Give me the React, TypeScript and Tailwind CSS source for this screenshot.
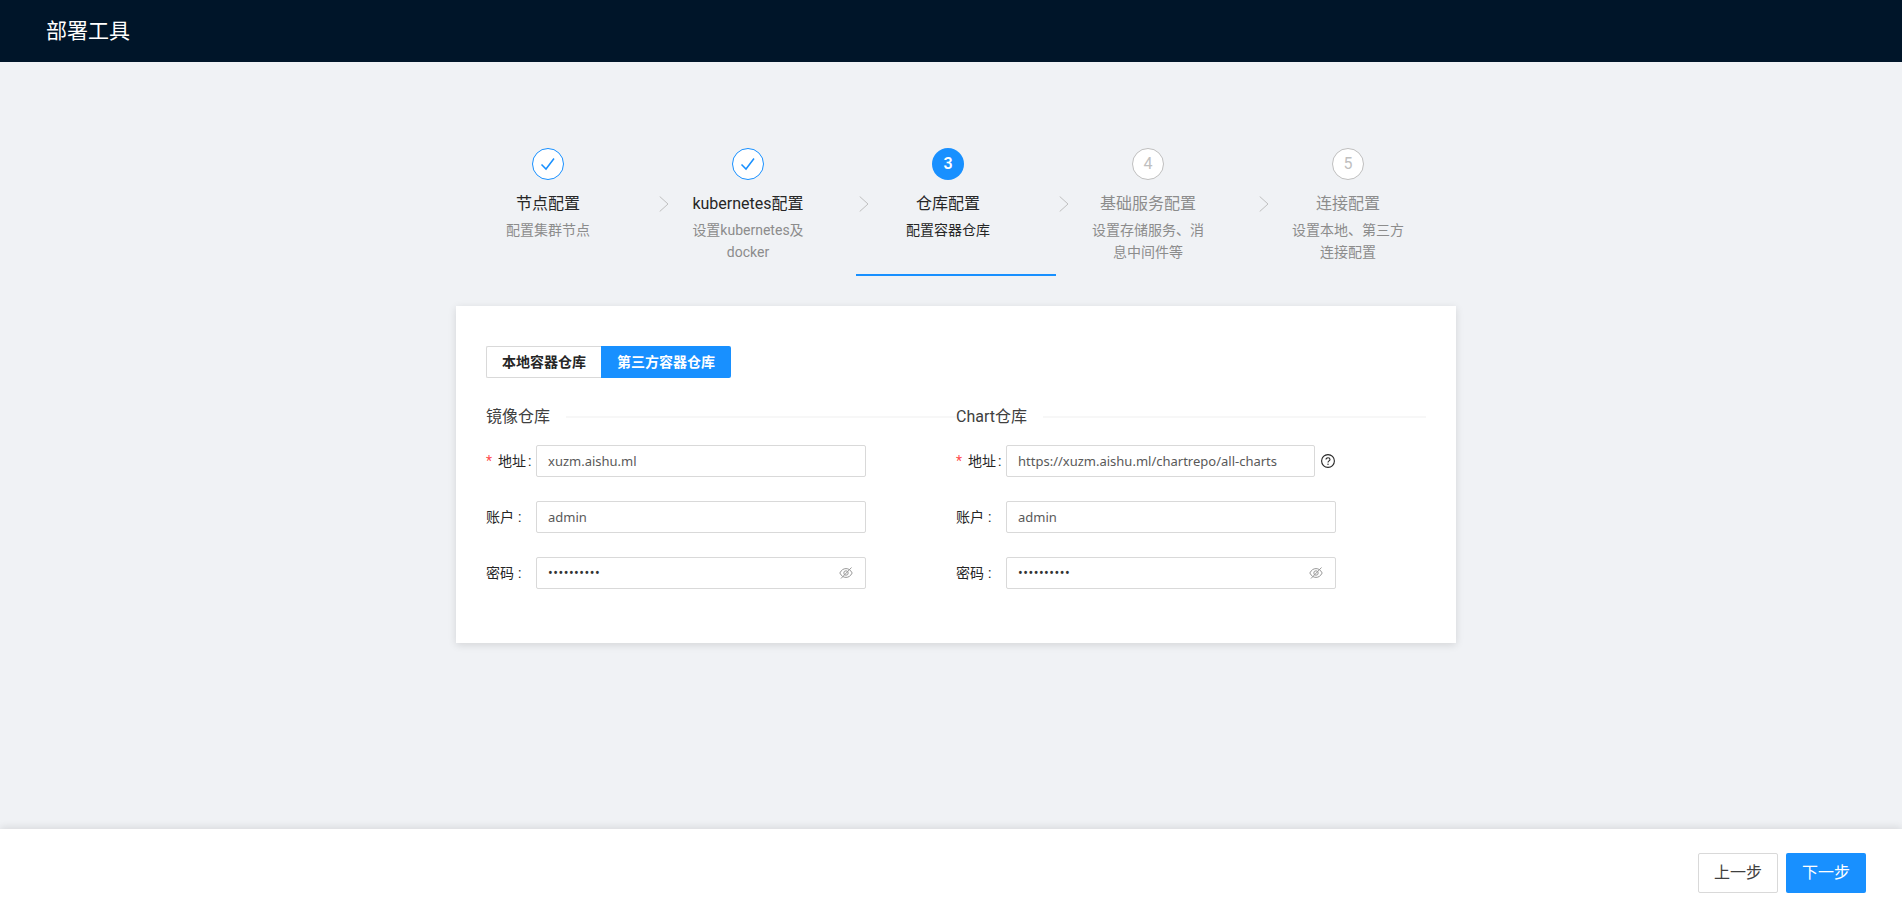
const font = "font-['Roboto','Noto_Sans_CJK_SC',sans-serif]"

const steps = [
  { key: 1, title: "节点配置", desc: "配置集群节点", state: "done" },
  { key: 2, title: "kubernetes配置", desc: "设置kubernetes及docker", state: "done" },
  { key: 3, title: "仓库配置", desc: "配置容器仓库", state: "active" },
  { key: 4, title: "基础服务配置", desc: "设置存储服务、消息中间件等", state: "todo" },
  { key: 5, title: "连接配置", desc: "设置本地、第三方连接配置", state: "todo" },
]

function CheckMark() {
  return (
    <svg width="16" height="14" viewBox="0 0 16 14" fill="none" stroke="#1890ff" strokeWidth="1.5">
      <path d="M1.5 7.5 L6 12 L14 1.5" />
    </svg>
  )
}

function EyeOff() {
  return (
    <svg width="14" height="14" viewBox="0 0 14 14" fill="none" stroke="#999" strokeWidth="1">
      <path d="M0.8 7 C2.4 4 4.4 2.6 7 2.6 C9.6 2.6 11.6 4 13.2 7 C11.6 10 9.6 11.4 7 11.4 C4.4 11.4 2.4 10 0.8 7 Z" />
      <circle cx="7" cy="7" r="2.2" />
      <path d="M2 12.5 L12.5 1.5" />
    </svg>
  )
}

function HelpIcon() {
  return (
    <svg width="14" height="14" viewBox="0 0 14 14" fill="none" stroke="#262626" strokeWidth="1.1">
      <circle cx="7" cy="7" r="6.4" />
      <path d="M5 5.6 C5 4.4 5.9 3.8 7 3.8 C8.1 3.8 9 4.5 9 5.5 C9 6.9 7 6.9 7 8.4" />
      <circle cx="7" cy="10.2" r="0.7" fill="#262626" stroke="none" />
    </svg>
  )
}

function Step({ step, last }: { step: (typeof steps)[number]; last: boolean }) {
  const { state } = step
  return (
    <div className={`relative w-[200px] h-[128px] pr-4 flex flex-col items-center ${state === "active" ? "border-b-2 border-[#1890ff]" : ""}`}>
      {state === "done" && (
        <div className="w-8 h-8 rounded-full border border-[#1890ff] bg-white flex items-center justify-center">
          <CheckMark />
        </div>
      )}
      {state === "active" && (
        <div className="w-8 h-8 rounded-full bg-[#1890ff] text-white text-base font-semibold flex items-center justify-center">{step.key}</div>
      )}
      {state === "todo" && (
        <div className="w-8 h-8 rounded-full border border-[#bfbfbf] bg-white text-[#bfbfbf] text-base flex items-center justify-center">{step.key}</div>
      )}
      <div className={`mt-[12px] text-base leading-6 ${state === "todo" ? "text-[#8c8c8c]" : "text-[#262626]"}`}>{step.title}</div>
      <div className={`w-[120px] mt-[3px] text-center text-sm leading-[22px] ${state === "active" ? "text-[#262626]" : "text-[#8c8c8c]"}`}>{step.desc}</div>
      {!last && (
        <svg className="absolute right-[-13px] top-[48px]" width="10" height="16" viewBox="0 0 10 16" fill="none" stroke="#bfbfbf">
          <path d="M0.7 0.5 L9 8 L0.7 15.5" />
        </svg>
      )}
    </div>
  )
}

function Field({ label, value, required, password, narrow }: { label: string; value: string; required?: boolean; password?: boolean; narrow?: boolean }) {
  return (
    <div className="flex items-center h-8 text-sm text-[#262626]">
      <div className="w-[50px] shrink-0 flex items-center whitespace-nowrap">
        {required && <span className="text-[#ff4d4f] w-[12px]">*</span>}
        <span>{label}</span>
        <span className={required ? "ml-[2px]" : "ml-1"}>:</span>
      </div>
      <div className={`h-8 flex items-center justify-between border border-[#d9d9d9] rounded-[2px] pl-[11px] pr-3 bg-white ${narrow ? "w-[309px]" : "w-[330px]"}`}>
        <span className={password ? "text-[#333] tracking-[0.5px]" : "text-[#595959] text-[13px] font-['Noto_Sans',sans-serif]"}>{value}</span>
        {password && <EyeOff />}
      </div>
      {narrow && <span className="ml-[6px]"><HelpIcon /></span>}
    </div>
  )
}

function Section({ title, narrow }: { title: string; narrow?: boolean }) {
  return (
    <div className="w-[470px]">
      <div className="flex items-center h-6">
        <span className="text-base text-[#404040] pr-4">{title}</span>
        <div className="flex-1 h-[2px] bg-[#f7f7f7]" />
      </div>
      <div className="mt-4 flex flex-col gap-6">
        <Field label="地址" value={narrow ? "https://xuzm.aishu.ml/chartrepo/all-charts" : "xuzm.aishu.ml"} required narrow={narrow} />
        <Field label="账户" value="admin" />
        <Field label="密码" value="••••••••••" password />
      </div>
    </div>
  )
}

export default function App() {
  return (
    <div className={`h-[909px] flex flex-col bg-[#f0f2f5] overflow-hidden ${font}`}>
      <div className="h-[62px] shrink-0 bg-[#001529] flex items-center pl-[46px] pt-[2px] text-[21px] text-white">部署工具</div>

      <div className="flex-1 flex flex-col items-center pt-[86px] pl-[10px]">
        <div className="flex w-[1000px]">
          {steps.map((s, i) => (
            <Step key={s.key} step={s} last={i === steps.length - 1} />
          ))}
        </div>

        <div className="w-[1000px] h-[337px] mt-[30px] bg-white shadow-[0_2px_8px_rgba(0,0,0,0.12)] px-[30px] pt-[40px]">
          <div className="flex h-8 text-sm font-semibold">
            <div className="w-[115px] flex items-center justify-center border border-r-0 border-[#d9d9d9] rounded-l-[2px] text-[#262626]">本地容器仓库</div>
            <div className="w-[130px] flex items-center justify-center bg-[#1890ff] rounded-r-[2px] text-white">第三方容器仓库</div>
          </div>
          <div className="flex mt-[27px]">
            <Section title="镜像仓库" />
            <Section title="Chart仓库" narrow />
          </div>
        </div>
      </div>

      <div className="h-[80px] shrink-0 bg-white shadow-[0_-2px_8px_rgba(0,0,0,0.1)] flex items-center justify-end gap-2 pr-9 pt-2 text-base">
        <button className="w-20 h-10 border border-[#d9d9d9] rounded-[2px] bg-white text-[#404040]">上一步</button>
        <button className="w-20 h-10 rounded-[2px] bg-[#1890ff] text-white">下一步</button>
      </div>
    </div>
  )
}
